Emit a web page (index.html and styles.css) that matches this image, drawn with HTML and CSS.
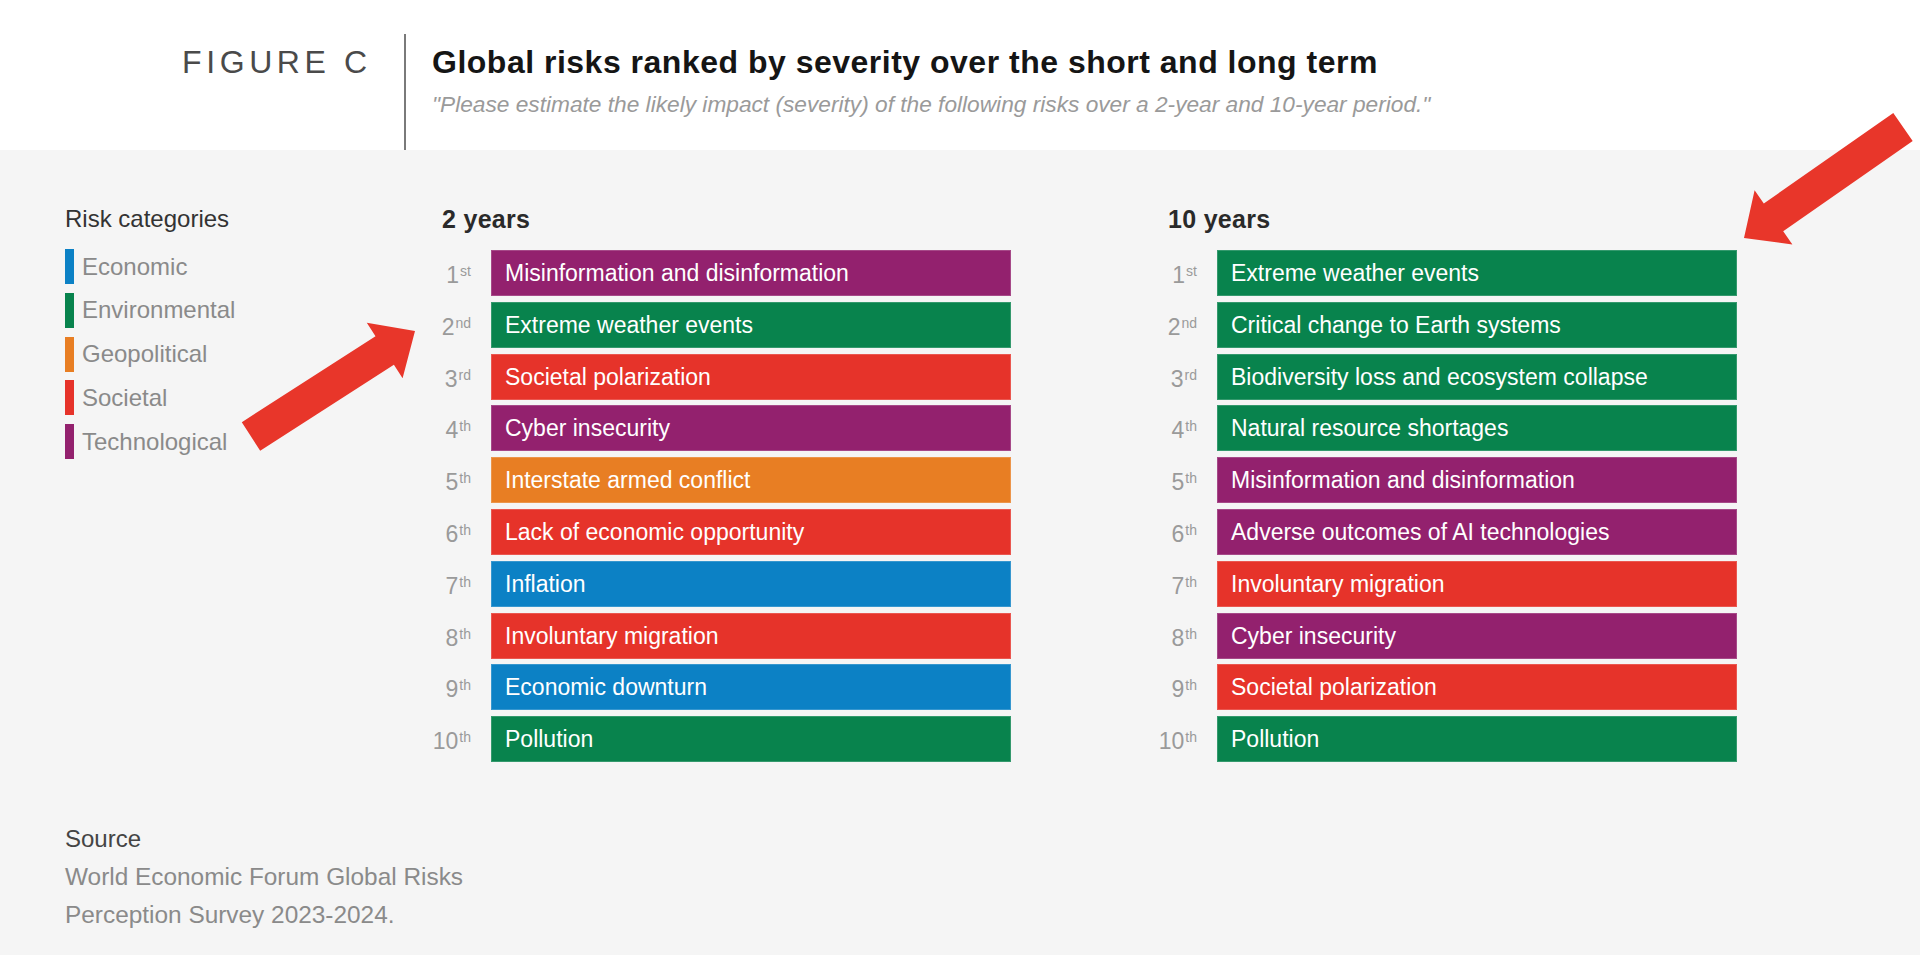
FILE: index.html
```html
<!DOCTYPE html>
<html lang="en">
<head>
<meta charset="utf-8">
<title>Figure C – Global risks ranked by severity</title>
<link rel="stylesheet" href="styles.css">
</head>
<body>
<header class="header">
  <div class="fig-label">FIGURE C</div>
  <div class="fig-titles">
    <h1 class="fig-title">Global risks ranked by severity over the short and long term</h1>
    <p class="fig-sub">"Please estimate the likely impact (severity) of the following risks over a 2-year and 10-year period."</p>
  </div>
</header>

<main class="main">
  <div class="top-row">
    <section class="legend">
      <h2 class="legend-title">Risk categories</h2>
      <ul class="legend-list">
        <li class="legend-item"><span class="swatch eco"></span>Economic</li>
        <li class="legend-item"><span class="swatch env"></span>Environmental</li>
        <li class="legend-item"><span class="swatch geo"></span>Geopolitical</li>
        <li class="legend-item"><span class="swatch soc"></span>Societal</li>
        <li class="legend-item"><span class="swatch tec"></span>Technological</li>
      </ul>
    </section>

    <div class="charts">
      <section class="chart">
        <h2 class="chart-title">2 years</h2>
        <ol class="rows">
          <li class="row"><span class="rank">1<sup>st</sup></span><span class="bar tec">Misinformation and disinformation</span></li>
          <li class="row"><span class="rank">2<sup>nd</sup></span><span class="bar env">Extreme weather events</span></li>
          <li class="row"><span class="rank">3<sup>rd</sup></span><span class="bar soc">Societal polarization</span></li>
          <li class="row"><span class="rank">4<sup>th</sup></span><span class="bar tec">Cyber insecurity</span></li>
          <li class="row"><span class="rank">5<sup>th</sup></span><span class="bar geo">Interstate armed conflict</span></li>
          <li class="row"><span class="rank">6<sup>th</sup></span><span class="bar soc">Lack of economic opportunity</span></li>
          <li class="row"><span class="rank">7<sup>th</sup></span><span class="bar eco">Inflation</span></li>
          <li class="row"><span class="rank">8<sup>th</sup></span><span class="bar soc">Involuntary migration</span></li>
          <li class="row"><span class="rank">9<sup>th</sup></span><span class="bar eco">Economic downturn</span></li>
          <li class="row"><span class="rank">10<sup>th</sup></span><span class="bar env">Pollution</span></li>
        </ol>
      </section>

      <section class="chart">
        <h2 class="chart-title">10 years</h2>
        <ol class="rows">
          <li class="row"><span class="rank">1<sup>st</sup></span><span class="bar env">Extreme weather events</span></li>
          <li class="row"><span class="rank">2<sup>nd</sup></span><span class="bar env">Critical change to Earth systems</span></li>
          <li class="row"><span class="rank">3<sup>rd</sup></span><span class="bar env">Biodiversity loss and ecosystem collapse</span></li>
          <li class="row"><span class="rank">4<sup>th</sup></span><span class="bar env">Natural resource shortages</span></li>
          <li class="row"><span class="rank">5<sup>th</sup></span><span class="bar tec">Misinformation and disinformation</span></li>
          <li class="row"><span class="rank">6<sup>th</sup></span><span class="bar tec">Adverse outcomes of AI technologies</span></li>
          <li class="row"><span class="rank">7<sup>th</sup></span><span class="bar soc">Involuntary migration</span></li>
          <li class="row"><span class="rank">8<sup>th</sup></span><span class="bar tec">Cyber insecurity</span></li>
          <li class="row"><span class="rank">9<sup>th</sup></span><span class="bar soc">Societal polarization</span></li>
          <li class="row"><span class="rank">10<sup>th</sup></span><span class="bar env">Pollution</span></li>
        </ol>
      </section>
    </div>
  </div>

  <section class="source">
    <h3 class="source-title">Source</h3>
    <p class="source-text">World Economic Forum Global Risks Perception Survey 2023-2024.</p>
  </section>
</main>

<svg class="arrows" width="1920" height="955" viewBox="0 0 1920 955" aria-hidden="true">
  <polygon class="arrow" points="241.8,422.2 375.5,336.2 366.8,322.7 415,331 402.6,378.3 393.9,364.8 260.2,450.8"/>
  <polygon class="arrow" points="1893.3,113.1 1763.8,203.5 1754.6,190.3 1744,238 1792.4,244.5 1783.2,231.3 1912.7,140.9"/>
</svg>
</body>
</html>
```

FILE: styles.css
```css
* { box-sizing: border-box; }

html, body {
  margin: 0;
  padding: 0;
}

body {
  width: 1920px;
  height: 955px;
  overflow: hidden;
  background: #f5f5f5;
  font-family: "Liberation Sans", Arial, sans-serif;
  color: #333;
  position: relative;
}

/* ---------- header ---------- */
.header {
  height: 150px;
  background: #ffffff;
  display: flex;
  align-items: flex-start;
  padding-top: 34px;
}

.fig-label {
  width: 404px;
  padding-left: 182px;
  padding-top: 9px;
  font-size: 32px;
  line-height: 38px;
  letter-spacing: 4.6px;
  color: #4a4a4a;
  white-space: nowrap;
}

.fig-titles {
  height: 116px;
  border-left: 2px solid #7a7a7a;
  padding-left: 26px;
  padding-top: 9px;
}

.fig-title {
  margin: 0;
  font-size: 32px;
  line-height: 38px;
  font-weight: 700;
  letter-spacing: 0.5px;
  color: #151515;
  white-space: nowrap;
}

.fig-sub {
  margin: 9px 0 0;
  font-size: 22.7px;
  line-height: 28px;
  font-style: italic;
  color: #9a9a9a;
  white-space: nowrap;
}

/* ---------- main ---------- */
.main {
  padding: 54px 0 0 65px;
}

.top-row {
  display: flex;
}

.legend {
  width: 358px;
  flex: none;
}

.legend-title {
  margin: 0 0 15px;
  font-size: 24px;
  line-height: 30px;
  font-weight: 400;
  color: #333;
}

.legend-list {
  list-style: none;
  margin: 0;
  padding: 0;
  display: flex;
  flex-direction: column;
  gap: 8.75px;
}

.legend-item {
  display: flex;
  align-items: center;
  gap: 8px;
  height: 35px;
  font-size: 24px;
  color: #8a8a8a;
}

.swatch {
  width: 9px;
  height: 35px;
  flex: none;
}

.charts {
  display: flex;
  gap: 138px;
}

.chart {
  width: 588px;
}

.chart-title {
  margin: 0 0 16px 19px;
  font-size: 25px;
  line-height: 30px;
  font-weight: 700;
  letter-spacing: 0.3px;
  color: #2a2a2a;
}

.rows {
  list-style: none;
  margin: 0;
  padding: 0;
  display: flex;
  flex-direction: column;
  gap: 5.8px;
}

.row {
  display: grid;
  grid-template-columns: 50px 520px;
  column-gap: 18px;
  height: 46px;
}

.rank {
  text-align: right;
  font-size: 23px;
  line-height: 44px;
  padding-top: 3px;
  padding-right: 2px;
  color: #9a9a9a;
  white-space: nowrap;
}

.rank sup {
  font-size: 14px;
  line-height: 0;
  vertical-align: 7px;
  margin-left: 1px;
}

.bar {
  display: block;
  height: 46px;
  padding-left: 14px;
  font-size: 23px;
  line-height: 46px;
  color: #ffffff;
  white-space: nowrap;
  box-shadow: inset 0 0 0 1px rgba(255, 255, 255, 0.18);
}

.eco { background: #0c81c5; }
.env { background: #08834d; }
.geo { background: #e87e23; }
.soc { background: #e6332a; }
.tec { background: #93216e; }

/* ---------- source ---------- */
.source {
  margin-top: 58px;
}

.source-title {
  margin: 0;
  font-size: 24px;
  line-height: 38px;
  font-weight: 400;
  color: #444;
}

.source-text {
  margin: 0;
  width: 430px;
  font-size: 24.4px;
  line-height: 38px;
  color: #8a8a8a;
}

/* ---------- annotation arrows ---------- */
.arrows {
  position: absolute;
  left: 0;
  top: 0;
  pointer-events: none;
}

.arrow {
  fill: #e8362a;
}
```
